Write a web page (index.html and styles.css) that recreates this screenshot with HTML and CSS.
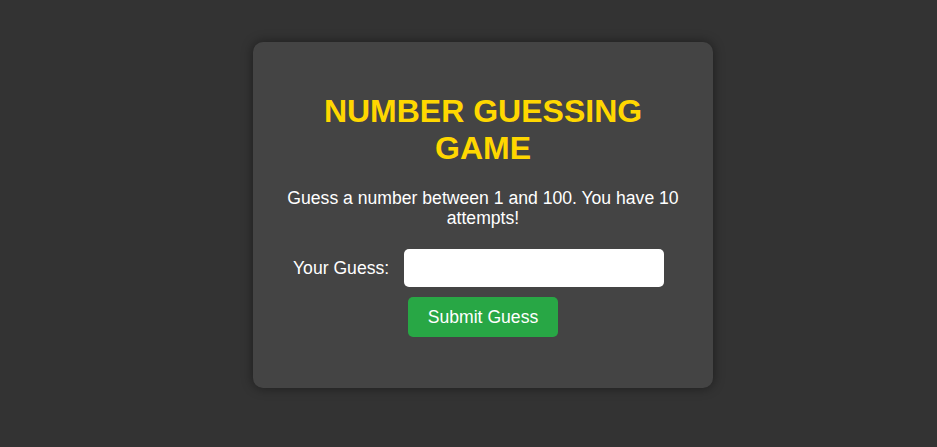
FILE: index.html
```html
<!DOCTYPE html>
<html lang="en">
<head>
<meta charset="utf-8">
<title>Number Guessing Game</title>
<link rel="stylesheet" href="styles.css">
</head>
<body>
<div class="page">
  <div class="card">
    <h1 class="title">NUMBER GUESSING GAME</h1>
    <p class="intro">Guess a number between 1 and 100. You have 10 attempts!</p>
    <div class="guess-row">
      <label class="guess-label" for="guess">Your Guess:</label>
      <input class="guess-input" id="guess" type="number">
    </div>
    <button class="submit-btn" type="button">Submit Guess</button>
  </div>
</div>
</body>
</html>
```

FILE: styles.css
```css
html, body {
  margin: 0;
  padding: 0;
  background: #333333;
  font-family: "Liberation Sans", Arial, sans-serif;
  color: #ffffff;
  height: 100%;
}

.page {
  padding: 42px 0 0 253px;
}

.card {
  width: 400px;
  padding: 30px;
  background: #444444;
  border-radius: 10px;
  box-shadow: 0 0 12px rgba(0, 0, 0, 0.45);
  display: flex;
  flex-direction: column;
  align-items: center;
  text-align: center;
}

.title {
  margin: 21px 0 21px;
  font-size: 32px;
  font-weight: bold;
  color: #ffd700;
  line-height: 36.8px;
}

.intro {
  margin: 0;
  font-size: 17.6px;
  line-height: 20.2px;
}

.guess-row {
  align-self: stretch;
  display: flex;
  align-items: center;
  gap: 15px;
  padding-left: 10px;
  margin-top: 21px;
}

.guess-label {
  font-size: 17.6px;
}

.guess-input {
  width: 260px;
  height: 38px;
  box-sizing: border-box;
  border: none;
  border-radius: 5px;
  background: #ffffff;
  padding: 8px;
  font-family: inherit;
  font-size: 16px;
}

.submit-btn {
  margin: 10px 0 21px;
  width: 150px;
  height: 40px;
  border: none;
  border-radius: 5px;
  background: #28a745;
  color: #ffffff;
  font-family: inherit;
  font-size: 17.6px;
  padding: 0;
}
```
